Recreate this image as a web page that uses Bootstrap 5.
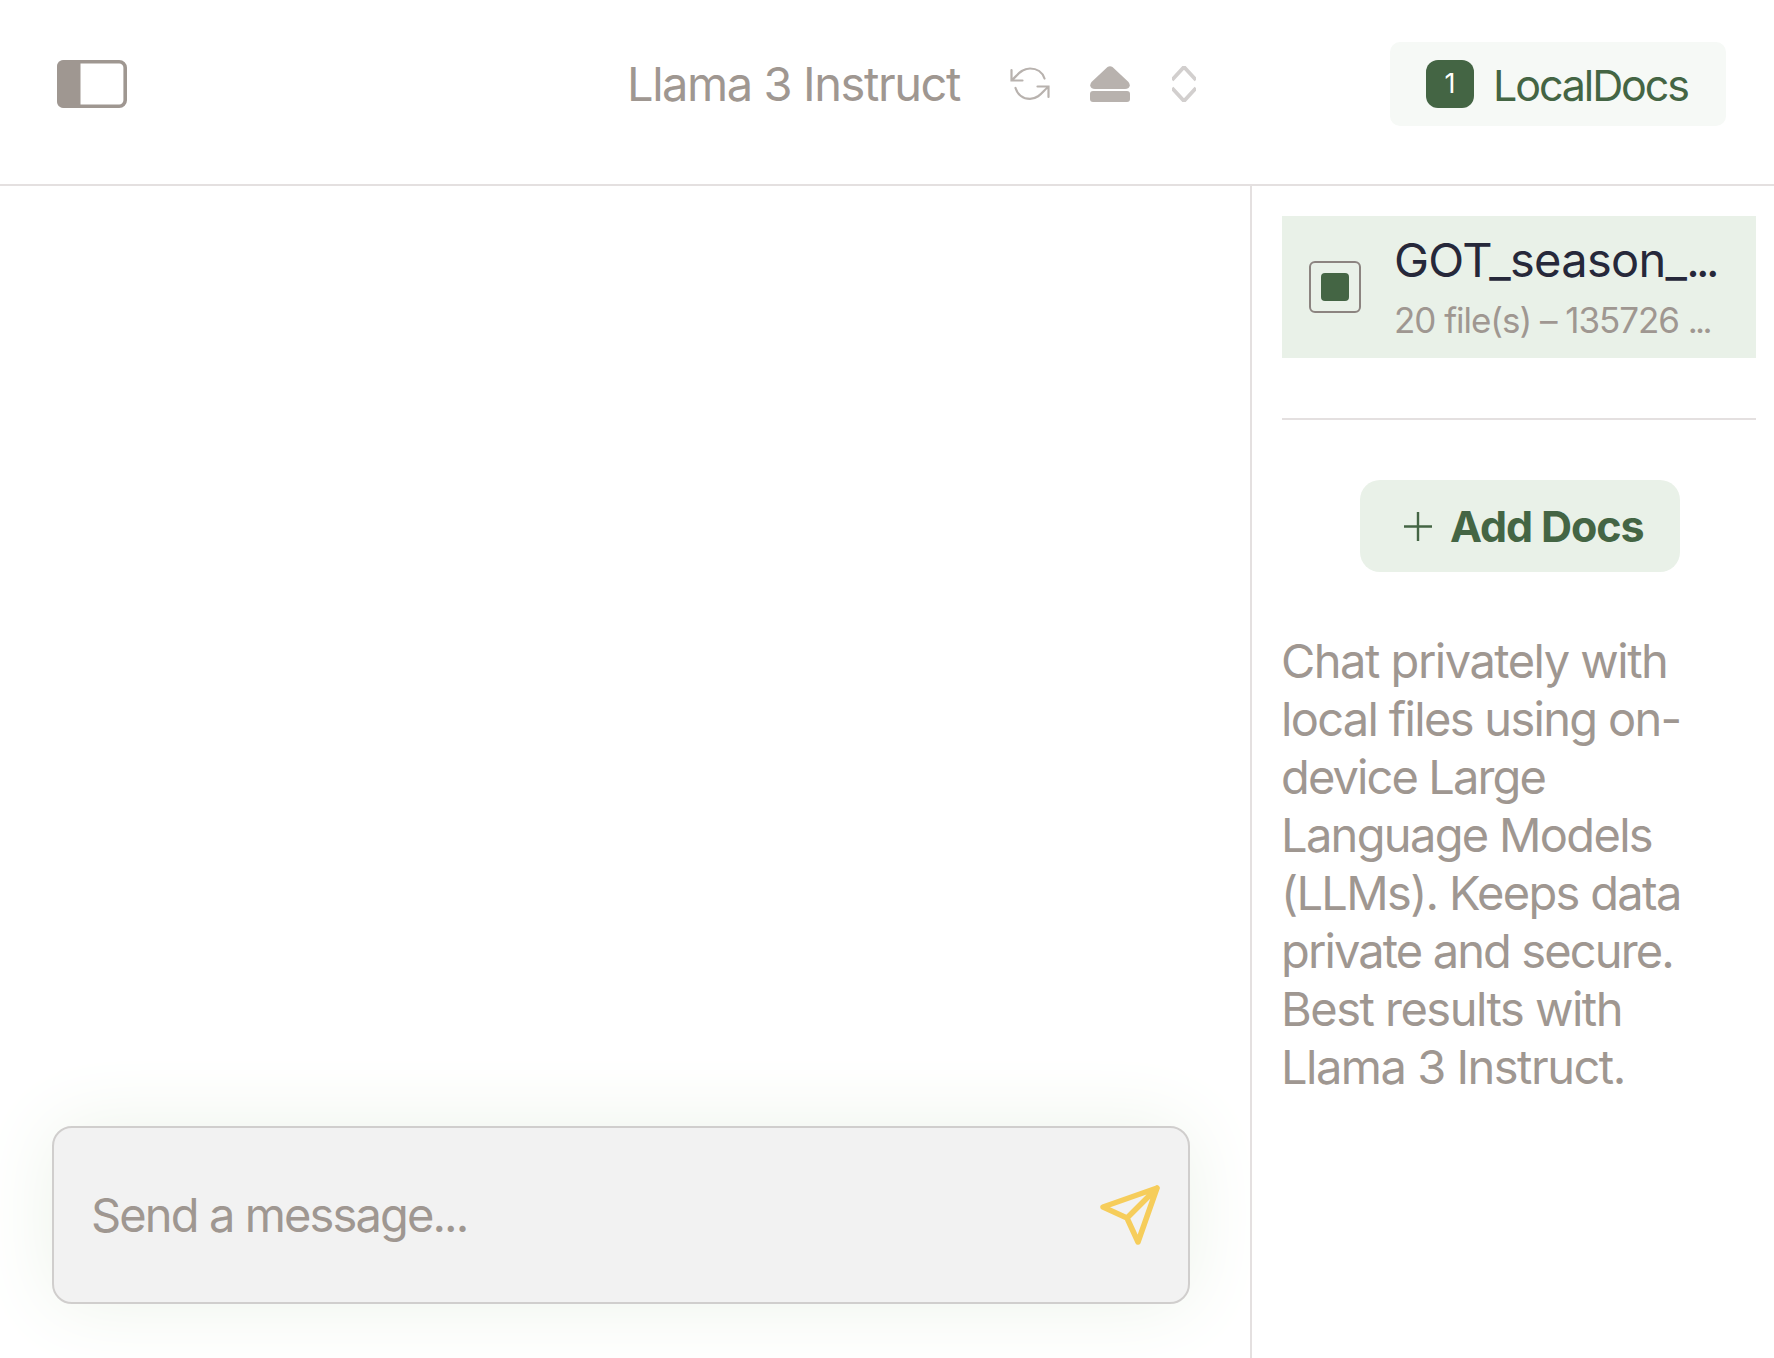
<!DOCTYPE html>
<html lang="en">
<head>
<meta charset="utf-8">
<title>LocalDocs chat</title>
<link href="https://cdn.jsdelivr.net/npm/bootstrap@5.3.0/dist/css/bootstrap.min.css" rel="stylesheet">
<script src="https://cdn.jsdelivr.net/npm/bootstrap@5.3.0/dist/js/bootstrap.bundle.min.js"></script>
<style>
body{font-family:Inter,"Liberation Sans",sans-serif;color:#9f9791;background:#fff;font-size:47px;line-height:58px}
.topbar{height:186px;border-bottom:2px solid #e4e0e0}
.side-toggle{margin:60px 0 0 57px}
.model-group{margin:55px 0 0 500px}
.model-name{width:383px;letter-spacing:-1.42px}
.icon-eject{margin-left:38px}
.icon-updown{margin-left:42px}
.docs-toggle{width:336px;height:84px;border-radius:10px;background:#f6f9f6;color:#446544;font-size:43px;letter-spacing:-2.1px;margin:42px 48px 0 auto;padding:1px 0 0 36px}
.docs-count{width:48px;height:48px;border-radius:12px;background:#446544;font-size:27px;line-height:48px;margin:-1px 19px 0 0;letter-spacing:0}
.side-panel{width:524px;border-left:2px solid #e4e0e0;padding:30px 18px 0 30px}
.coll-row{height:142px;background:#e9f1e8;padding:0 0 0 27px}
.coll-check{width:52px;height:52px;border:2px solid #8c8480;border-radius:6px}
.coll-check i{width:28px;height:28px;border-radius:4px;background:#446544}
.coll-text{margin-left:33px;padding-top:8px}
.coll-name{color:#26283a;letter-spacing:-.7px}
.coll-name .dots{letter-spacing:-3.7px}
.coll-meta{font-size:35px;line-height:62px;letter-spacing:-1.04px}
.coll-meta .dots{letter-spacing:-2.8px}
.divider{height:2px;background:#e4e0e0;margin-top:60px}
.add-btn{width:320px;height:92px;border-radius:20px;background:#e9f1e8;color:#446544;font-size:43px;font-weight:700;letter-spacing:-1.1px;margin:60px 0 0 78px;padding:0 0 0 44px}
.add-btn span{margin-left:18px}
.blurb{margin:60px 0 0 -1px}
.ls-a{letter-spacing:-1.5px}
.ls-b{letter-spacing:-1.68px}
.ls-c{letter-spacing:-1.88px}
.composer{height:178px;margin:0 60px 54px 52px;border:2px solid #d0cecd;border-radius:20px;background:#f2f2f2;box-shadow:0 0 80px #edf3ea;padding:0 28px 0 37px}
</style>
</head>
<body class="vh-100 d-flex flex-column overflow-hidden">
<header class="topbar d-flex align-items-start flex-shrink-0">
  <svg class="side-toggle" width="70" height="48" viewBox="0 0 70 48"><rect x="1.8" y="1.8" width="66.4" height="44.4" rx="6" fill="none" stroke="#9f9791" stroke-width="3.6"/><path d="M7 0H23.5V48H7Q0 48 0 41V7Q0 0 7 0Z" fill="#9f9791"/></svg>
  <div class="model-group d-flex align-items-center">
    <span class="model-name text-nowrap">Llama 3 Instruct</span>
    <svg width="42" height="36" viewBox="0 0 42 36" fill="none" stroke="#b8b2ae" stroke-width="2.200" stroke-linecap="round"><path d="M1.500 4V14.500H12.500M2.500 13.500C7 10 11 2.500 20 2.500C27 2.500 32.500 6.500 34.500 12.500"/><path d="M38.500 31V20.500H27.500M37.500 21.500C33 25 29 32.800 20 32.800C13 32.800 7.500 28.500 5.500 22"/></svg>
    <svg class="icon-eject" width="40" height="36" viewBox="0 0 40 36" fill="#b8b2ae"><path d="M17.500 1Q20 -.5 22.500 1L38.500 16Q41 19.500 38.500 22Q37 23 35 23H5Q3 23 1.500 22Q-1 19.500 1.500 16Z"/><rect y="25" width="40" height="11" rx="3"/></svg>
    <svg class="icon-updown" width="24" height="36" viewBox="0 0 24 36" fill="none" stroke="#d2cfce" stroke-width="3.800"><path d="M0 14L12 1L24 14M0 22L12 35L24 22"/></svg>
  </div>
  <div class="docs-toggle d-flex align-items-center">
    <span class="docs-count text-white text-center">1</span><span>LocalDocs</span>
  </div>
</header>
<div class="d-flex flex-grow-1">
  <main class="flex-grow-1 d-flex flex-column justify-content-end">
    <div class="composer d-flex align-items-center justify-content-between">
      <span class="ls-c">Send a message...</span>
      <svg width="60" height="60" viewBox="0 0 60 60" fill="none" stroke="#f6cd5b" stroke-width="5.500" stroke-linejoin="round" stroke-linecap="round"><path d="M57 3L3 22L27 33L38 57ZM57 3L27 33"/></svg>
    </div>
  </main>
  <aside class="side-panel flex-shrink-0">
    <div class="coll-row d-flex align-items-center">
      <span class="coll-check d-flex align-items-center justify-content-center"><i></i></span>
      <div class="coll-text text-nowrap">
        <div class="coll-name">GOT_season_<span class="dots">...</span></div>
        <div class="coll-meta">20 file(s) – 135726 <span class="dots">...</span></div>
      </div>
    </div>
    <div class="divider"></div>
    <div class="add-btn d-flex align-items-center">
      <svg width="28" height="29" viewBox="0 0 28 29" stroke="#446544" stroke-width="2.400"><path d="M0 14.500H28M14 0V29"/></svg>
      <span>Add Docs</span>
    </div>
    <div class="blurb text-nowrap"><span class="ls-a">Chat privately with</span><br><span class="ls-b">local files using on-</span><br><span class="ls-c">device Large</span><br><span class="ls-b">Language Models</span><br><span class="ls-b">(LLMs). Keeps data</span><br><span class="ls-c">private and secure.</span><br><span class="ls-a">Best results with</span><br><span class="ls-a">Llama 3 Instruct.</span></div>
  </aside>
</div>
</body>
</html>
